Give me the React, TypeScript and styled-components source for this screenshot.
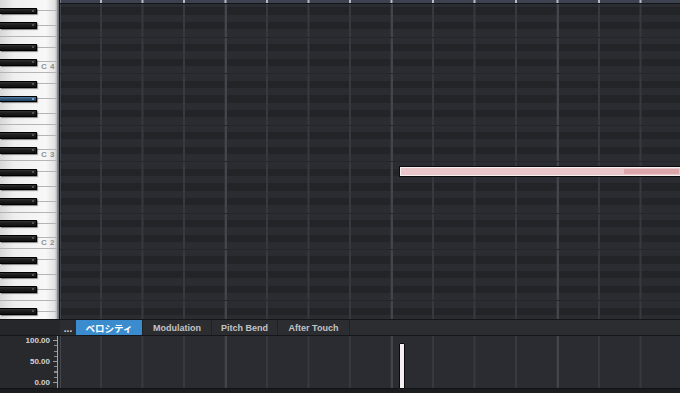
import React from "react"
import styled, { createGlobalStyle, css } from "styled-components"

// one semitone row, an octave is 88px on screen
const ROW = 88 / 12
const ROWS = 45
const TOP_PITCH = 69 // A4 is the first row at the top
const BLACK_CLASSES = [1, 3, 6, 8, 10]
const HIGHLIGHT = 56 // G#3

const isBlack = (p: number) => BLACK_CLASSES.includes(((p % 12) + 12) % 12)
const rowTop = (p: number) => (TOP_PITCH - p) * ROW

const pitches = Array.from({ length: ROWS }, (_, i) => TOP_PITCH - i)

type WhiteKeyInfo = { pitch: number; top: number; bottom: number }

const whiteKeys: WhiteKeyInfo[] = pitches
	.filter((p) => !isBlack(p))
	.map((p) => ({
		pitch: p,
		top: isBlack(p + 1) ? rowTop(p + 1) + ROW / 2 : rowTop(p),
		bottom: isBlack(p - 1) ? rowTop(p - 1) + ROW / 2 : rowTop(p) + ROW,
	}))

const GlobalStyle = createGlobalStyle`
	html, body {
		margin: 0;
		padding: 0;
		background: #1c1d20;
	}
	body {
		font-family: "Liberation Sans", Arial, "Noto Sans CJK JP", sans-serif;
	}
	#root {
		width: 680px;
		height: 393px;
		overflow: hidden;
	}
`

const gridLines = css`
	background-image:
		linear-gradient(to right, #42454c 0 2px, transparent 2px),
		linear-gradient(to right, #36393f 0 1.5px, transparent 1.5px);
	background-size: 166px 100%, 41.5px 100%;
	background-position: 165px 0, 40px 0;
	background-repeat: repeat-x;
`

const Screen = styled.div`
	width: 680px;
	height: 393px;
	display: flex;
	flex-direction: column;
	background: #1c1d20;
	overflow: hidden;
`

const Editor = styled.div`
	display: flex;
	height: 319px;
	flex-shrink: 0;
	overflow: hidden;
`

const Keyboard = styled.div`
	position: relative;
	width: 57px;
	flex-shrink: 0;
	overflow: hidden;
	background: #f2f2f2;
`

const WhiteColumn = styled.div`
	display: flex;
	flex-direction: column;
`

const WhiteKey = styled.div`
	flex-shrink: 0;
	box-sizing: border-box;
	display: flex;
	justify-content: flex-end;
	align-items: center;
	padding-right: 2px;
	border-bottom: 1px solid #b4b4b6;
	background: linear-gradient(to right, #d8d8d8 0, #efefef 25%, #f8f8f8 80%, #e2e2e2 96%, #b4b4b4 100%);
`

const KeyLabel = styled.span`
	font-size: 8px;
	font-weight: 700;
	color: #8e8e90;
	letter-spacing: 0.5px;
	line-height: 8px;
`

const BlackKey = styled.div<{ $lit?: boolean }>`
	position: absolute;
	left: 0;
	width: 37px;
	height: 6.5px;
	box-sizing: border-box;
	border: 1px solid #000;
	border-left: none;
	border-radius: 0 1px 1px 0;
	background: ${(p) =>
		p.$lit
			? "linear-gradient(to bottom, #5a81a8 0, #345a80 40%, #213f5e 100%)"
			: "linear-gradient(to bottom, #333335 0, #1e1e1f 40%, #101011 100%)"};
	box-shadow: 1px 1px 1px rgba(0, 0, 0, 0.45);

	&::after {
		content: "";
		position: absolute;
		right: 2px;
		top: 1px;
		width: 2px;
		height: 2px;
		background: ${(p) => (p.$lit ? "#7fa3c6" : "#555557")};
	}
`

const KeyDivider = styled.div`
	width: 3px;
	flex-shrink: 0;
	background: linear-gradient(to right, #8f9297 0, #6a6d72 2px, #17181b 2px);
`

const Grid = styled.div`
	position: relative;
	flex: 1;
	display: flex;
	flex-direction: column;
	overflow: hidden;
`

const Row = styled.div<{ $black?: boolean; $sep?: boolean }>`
	flex-shrink: 0;
	height: ${ROW}px;
	box-sizing: border-box;
	background-color: ${(p) => (p.$black ? "#222427" : "#2a2c31")};
	border-top: ${(p) => (p.$sep ? "1px solid #242629" : "none")};
	${gridLines}
`

const Ruler = styled.div`
	position: absolute;
	top: 0;
	left: 0;
	right: 0;
	height: 3px;
	border-bottom: 1px solid #131417;
	background-color: #3c4250;
	background-image: linear-gradient(to right, #b6bbc5 0 2px, transparent 2px);
	background-size: 41.5px 100%;
	background-position: 40px 0;
	background-repeat: repeat-x;
`

const Note = styled.div`
	position: absolute;
	top: 166px;
	left: 339px;
	right: -6px;
	height: 11px;
	box-sizing: border-box;
	border: 1px solid #0b0b0c;
	background: #e8c6ca;
	box-shadow: inset 0 0 0 1px #f7eef0;

	&::after {
		content: "";
		position: absolute;
		top: 2px;
		bottom: 2px;
		left: 224px;
		right: 6px;
		background: #dca5aa;
	}
`

const TabBar = styled.div`
	display: flex;
	height: 15px;
	flex-shrink: 0;
	background: #2b2d31;
	border-top: 1px solid #141517;
	border-bottom: 1px solid #151619;
	font-size: 9px;
	font-weight: 700;
	color: #c3c4c6;
`

const TabSpacer = styled.div`
	width: 60px;
	flex-shrink: 0;
	background: #25272b;
`

const More = styled.div`
	width: 16px;
	flex-shrink: 0;
	display: flex;
	align-items: flex-end;
	justify-content: center;
	padding-bottom: 3px;
	box-sizing: border-box;
	font-size: 10px;
	font-weight: 700;
	line-height: 6px;
	color: #d4d4d6;
	letter-spacing: 0;
`

const Tab = styled.div<{ $w: number; $active?: boolean }>`
	width: ${(p) => p.$w}px;
	flex-shrink: 0;
	box-sizing: border-box;
	display: flex;
	align-items: center;
	justify-content: center;
	border-right: 1px solid #1f2124;
	background: ${(p) => (p.$active ? "#3a8cce" : "transparent")};
	color: ${(p) => (p.$active ? "#ffffff" : "#c3c4c6")};
	font-size: ${(p) => (p.$active ? "9.5px" : "9px")};
	font-family: ${(p) =>
		p.$active
			? '"Noto Sans CJK JP", "Liberation Sans", sans-serif'
			: '"Liberation Sans", Arial, sans-serif'};
	white-space: nowrap;
`

const VelocityPane = styled.div`
	display: flex;
	height: 52px;
	flex-shrink: 0;
	background: #2a2c31;
`

const Scale = styled.div`
	width: 60px;
	flex-shrink: 0;
	display: flex;
	background: #28292d;
`

const ScaleLabels = styled.div`
	width: 50px;
	display: flex;
	flex-direction: column;
	align-items: flex-end;
	gap: 12px;
	font-size: 8px;
	font-weight: 700;
	line-height: 9px;
	color: #d2d3d5;
`

const ScaleTicks = styled.div`
	width: 8px;
	box-sizing: border-box;
	border-right: 1px solid #a3a4a7;
	background-image:
		repeating-linear-gradient(to bottom, #9c9da0 0 1px, transparent 1px 21px),
		repeating-linear-gradient(to bottom, #8a8b8e 0 1px, transparent 1px 5.25px);
	background-size: 4px 43px, 3px 43px;
	background-position: right 4px, right 4px;
	background-repeat: no-repeat;
	margin-right: 2px;
`

const Lane = styled.div`
	position: relative;
	flex: 1;
	${gridLines}
`

const VelocityBar = styled.div`
	position: absolute;
	left: 339px;
	top: 7px;
	bottom: -1px;
	width: 6px;
	box-sizing: border-box;
	border: 1px solid #0a0a0b;
	border-radius: 1px;
	background: #f4eff1;
`

const BottomStrip = styled.div`
	flex: 1;
	background: #1b1c1f;
	border-top: 1px solid #111214;
`

const tabs = [
	{ label: "ベロシティ", w: 67, active: true },
	{ label: "Modulation", w: 69 },
	{ label: "Pitch Bend", w: 66 },
	{ label: "After Touch", w: 72 },
]

export default function App() {
	const firstTop = whiteKeys[0].top
	return (
		<>
			<GlobalStyle />
			<Screen>
				<Editor>
					<Keyboard>
						<WhiteColumn style={{ marginTop: firstTop }}>
							{whiteKeys.map((k) => (
								<WhiteKey key={k.pitch} style={{ height: k.bottom - k.top }}>
									{k.pitch % 12 === 0 && <KeyLabel>C {k.pitch / 12 - 1}</KeyLabel>}
								</WhiteKey>
							))}
						</WhiteColumn>
						{pitches.filter(isBlack).map((p) => (
							<BlackKey key={p} $lit={p === HIGHLIGHT} style={{ top: rowTop(p) + 0.4 }} />
						))}
					</Keyboard>
					<KeyDivider />
					<Grid>
						{pitches.map((p) => {
							const pc = ((p % 12) + 12) % 12
							return <Row key={p} $black={isBlack(p)} $sep={pc === 4 || pc === 11} />
						})}
						<Ruler />
						<Note />
					</Grid>
				</Editor>
				<TabBar>
					<TabSpacer />
					<More>...</More>
					{tabs.map((t) => (
						<Tab key={t.label} $w={t.w} $active={t.active}>
							{t.label}
						</Tab>
					))}
				</TabBar>
				<VelocityPane>
					<Scale>
						<ScaleLabels>
							<span>100.00</span>
							<span>50.00</span>
							<span>0.00</span>
						</ScaleLabels>
						<ScaleTicks />
					</Scale>
					<Lane>
						<VelocityBar />
					</Lane>
				</VelocityPane>
				<BottomStrip />
			</Screen>
		</>
	)
}
